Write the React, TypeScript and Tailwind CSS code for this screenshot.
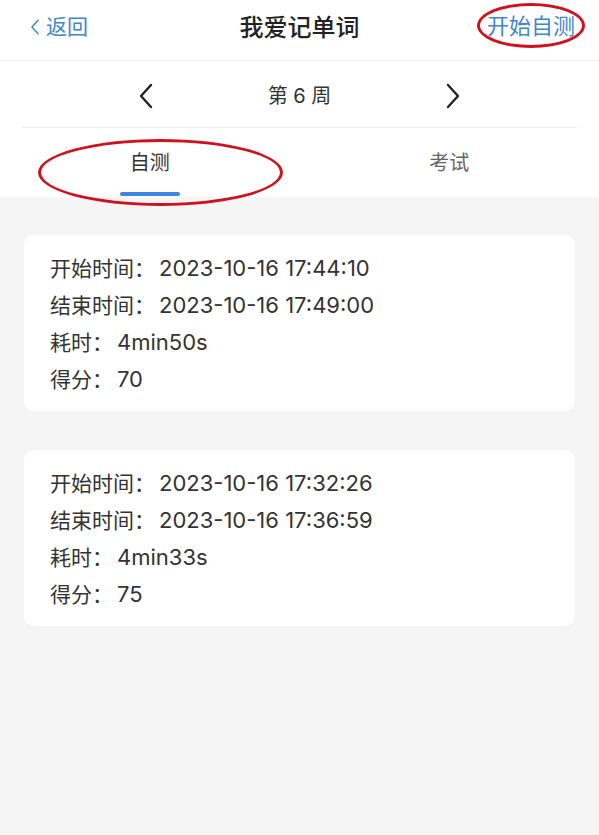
const records = [
  { start: '2023-10-16 17:44:10', end: '2023-10-16 17:49:00', cost: '4min50s', score: '70' },
  { start: '2023-10-16 17:32:26', end: '2023-10-16 17:36:59', cost: '4min33s', score: '75' },
];

function Chevron({ dir, className }: { dir: 'left' | 'right'; className?: string }) {
  return (
    <svg viewBox="0 0 16 26" className={className} fill="none" stroke="currentColor" strokeWidth={2.4} strokeLinecap="round" strokeLinejoin="round">
      {dir === 'left' ? <polyline points="13,2 3,13 13,24" /> : <polyline points="3,2 13,13 3,24" />}
    </svg>
  );
}

function Row({ label, value }: { label: string; value: string }) {
  return (
    <div>
      {label}：<span className="ml-[4px] text-[22px]">{value}</span>
    </div>
  );
}

export default function App() {
  return (
    <div
      className="min-h-[835px] w-[599px] bg-[#f5f5f5] text-[#333]"
      style={{ fontFamily: 'Inter, "Noto Sans CJK SC", sans-serif' }}
    >
      <div className="bg-white">
        {/* header */}
        <div className="relative flex h-[61px] items-center justify-between border-b border-[#f0f0f0] pb-[7px] pl-[30px] pr-[24px]">
          <div className="flex items-center text-[21px] text-[#3f86cc]">
            <Chevron dir="left" className="mr-[6px] h-[16px] w-[10px]" />
            <span>返回</span>
          </div>
          <div className="absolute left-1/2 top-[10px] -translate-x-1/2 text-[24px] font-medium text-[#222]">我爱记单词</div>
          <div className="relative text-[22px] text-[#3f86cc]">
            开始自测
            <div className="absolute -bottom-[5px] -left-[10px] -right-[10px] -top-[7px] rounded-[50%] border-[3px] border-[#d0101c]" />
          </div>
        </div>

        {/* week switch */}
        <div className="mx-[22px] flex h-[67px] items-center justify-center border-b border-[#eeeeee] pt-[4px]">
          <Chevron dir="left" className="h-[26px] w-[16px] text-[#222]" />
          <span className="mx-[114px] text-[20px] text-[#333]">第 6 周</span>
          <Chevron dir="right" className="h-[26px] w-[16px] text-[#222]" />
        </div>

        {/* tabs */}
        <div className="grid h-[69px] grid-cols-2">
          <div className="relative flex flex-col items-center pt-[20px]">
            <span className="text-[20px] text-[#333]">自测</span>
            <div className="absolute bottom-[1px] h-[4px] w-[60px] rounded-full bg-[#3a86e0]" />
            <div className="absolute left-[38px] top-[11px] h-[67px] w-[245px] rounded-[50%] border-[3px] border-[#d0101c]" />
          </div>
          <div className="flex flex-col items-center pt-[20px]">
            <span className="text-[20px] text-[#666]">考试</span>
          </div>
        </div>
      </div>

      {/* records */}
      <div className="flex flex-col gap-[39px] px-[24px] pt-[38px]">
        {records.map((r, idx) => (
          <div key={idx} className="rounded-[10px] bg-white px-[26px] pb-[13px] pt-[15px] text-[21px] leading-[37px]">
            <Row label="开始时间" value={r.start} />
            <Row label="结束时间" value={r.end} />
            <Row label="耗时" value={r.cost} />
            <Row label="得分" value={r.score} />
          </div>
        ))}
      </div>
    </div>
  );
}
